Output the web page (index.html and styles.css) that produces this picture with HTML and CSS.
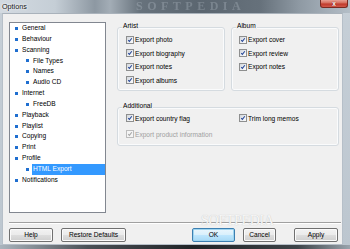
FILE: index.html
```html
<!DOCTYPE html>
<html>
<head>
<meta charset="utf-8">
<link rel="stylesheet" href="styles.css">
</head>
<body>
<div class="window">
  <div class="titlebar">
    <span class="title">Options</span>
    <span class="wm-title">SOFTPEDIA</span>
    <span class="close">x</span>
  </div>
  <div class="client">
    <div class="main">
      <div class="tree">
        <div class="item l1"><span class="bullet"></span><span class="label">General</span></div>
        <div class="item l1"><span class="bullet"></span><span class="label">Behaviour</span></div>
        <div class="item l1"><span class="bullet"></span><span class="label">Scanning</span></div>
        <div class="item l2"><span class="bullet"></span><span class="label">File Types</span></div>
        <div class="item l2"><span class="bullet"></span><span class="label">Names</span></div>
        <div class="item l2"><span class="bullet"></span><span class="label">Audio CD</span></div>
        <div class="item l1"><span class="bullet"></span><span class="label">Internet</span></div>
        <div class="item l2"><span class="bullet"></span><span class="label">FreeDB</span></div>
        <div class="item l1"><span class="bullet"></span><span class="label">Playback</span></div>
        <div class="item l1"><span class="bullet"></span><span class="label">Playlist</span></div>
        <div class="item l1"><span class="bullet"></span><span class="label">Copying</span></div>
        <div class="item l1"><span class="bullet"></span><span class="label">Print</span></div>
        <div class="item l1"><span class="bullet"></span><span class="label">Profile</span></div>
        <div class="item l2 selected"><span class="bullet"></span><span class="label">HTML Export</span></div>
        <div class="item l1"><span class="bullet"></span><span class="label">Notifications</span></div>
      </div>
      <div class="panel">
        <div class="top-groups">
          <div class="group artist">
            <span class="group-title">Artist</span>
            <div class="check"><span class="cb"><svg viewBox="0 0 8 8"><path d="M1.6 4.2 L3.2 5.9 L6.4 1.6"/></svg></span>Export photo</div>
            <div class="check"><span class="cb"><svg viewBox="0 0 8 8"><path d="M1.6 4.2 L3.2 5.9 L6.4 1.6"/></svg></span>Export biography</div>
            <div class="check"><span class="cb"><svg viewBox="0 0 8 8"><path d="M1.6 4.2 L3.2 5.9 L6.4 1.6"/></svg></span>Export notes</div>
            <div class="check"><span class="cb"><svg viewBox="0 0 8 8"><path d="M1.6 4.2 L3.2 5.9 L6.4 1.6"/></svg></span>Export albums</div>
          </div>
          <div class="group album">
            <span class="group-title">Album</span>
            <div class="check"><span class="cb"><svg viewBox="0 0 8 8"><path d="M1.6 4.2 L3.2 5.9 L6.4 1.6"/></svg></span>Export cover</div>
            <div class="check"><span class="cb"><svg viewBox="0 0 8 8"><path d="M1.6 4.2 L3.2 5.9 L6.4 1.6"/></svg></span>Export review</div>
            <div class="check"><span class="cb"><svg viewBox="0 0 8 8"><path d="M1.6 4.2 L3.2 5.9 L6.4 1.6"/></svg></span>Export notes</div>
          </div>
        </div>
        <div class="group additional">
          <span class="group-title">Additional</span>
          <div class="add-grid">
            <div class="check"><span class="cb"><svg viewBox="0 0 8 8"><path d="M1.6 4.2 L3.2 5.9 L6.4 1.6"/></svg></span>Export country flag</div>
            <div class="check"><span class="cb"><svg viewBox="0 0 8 8"><path d="M1.6 4.2 L3.2 5.9 L6.4 1.6"/></svg></span>Trim long memos</div>
            <div class="check disabled"><span class="cb"><svg viewBox="0 0 8 8"><path d="M1.6 4.2 L3.2 5.9 L6.4 1.6"/></svg></span>Export product information</div>
          </div>
        </div>
      </div>
    </div>
    <div class="sep"></div>
    <div class="buttons">
      <span class="btn help">Help</span>
      <span class="btn restore">Restore Defaults</span>
      <span class="btn ok">OK</span>
      <span class="btn cancel">Cancel</span>
      <span class="btn apply">Apply</span>
    </div>
    <span class="wm-bottom">SOFTPEDIA</span>
  </div>
</div>
</body>
</html>
```

FILE: styles.css
```css
html, body {
  margin: 0;
  padding: 0;
  width: 350px;
  height: 249px;
  overflow: hidden;
  font-family: "Liberation Sans", Arial, sans-serif;
  font-size: 6.6px;
  color: #000;
}

.window {
  position: relative;
  width: 350px;
  height: 249px;
  background:
    linear-gradient(90deg, #aab4bd 0%, #4a5056 25%, #202326 55%, #3d4348 85%, #9aa4ad 100%) bottom / 100% 4px no-repeat,
    linear-gradient(180deg, #c6cfd7 0%, #bcc6cf 100%);
}

.titlebar {
  position: relative;
  height: 13px;
  background: linear-gradient(90deg, #d3dae1 0px, #c5ced6 55px, #8d98a2 95px, #a3adb6 110px, #67727c 140px, #5b6670 200px, #66717b 260px, #8f9aa4 300px, #b4bec7 350px);
}

.title {
  position: absolute;
  left: 2px;
  top: 2px;
  font-size: 7.2px;
  line-height: 9px;
  color: #111;
  text-shadow: 0 0 3px #fff, 0 0 2px #fff;
}

.wm-title {
  position: absolute;
  left: 136px;
  top: 0;
  font-family: "Liberation Serif", serif;
  font-weight: bold;
  font-size: 12px;
  line-height: 13px;
  letter-spacing: 4.5px;
  color: rgba(225, 232, 240, 0.22);
  filter: blur(0.6px);
}

.close {
  position: absolute;
  right: 2px;
  top: 0;
  width: 28px;
  height: 8px;
  box-sizing: border-box;
  border: 1px solid #7a2a22;
  border-top: none;
  border-radius: 0 0 3px 3px;
  background: linear-gradient(180deg, #e8a094 0%, #d46a5a 45%, #c0392b 55%, #d0584a 100%);
  color: #fff;
  font-weight: bold;
  font-size: 6.5px;
  line-height: 7px;
  text-align: center;
  text-shadow: 0 0 1px #600;
}

.client {
  position: relative;
  box-sizing: border-box;
  margin: 0 7px 0 2px;
  height: 232px;
  background: #f0f0f0;
  border: 1px solid #b6bfc8;
  border-top-color: #a9b2bb;
  padding: 8px 0 0 6px;
}

.main {
  display: flex;
  align-items: flex-start;
}

.tree {
  box-sizing: border-box;
  width: 97px;
  height: 191px;
  background: #fff;
  border: 1px solid #828790;
}

.item {
  display: flex;
  align-items: stretch;
  height: 10.85px;
}

.item.l1 { padding-left: 5px; }
.item.l2 { padding-left: 16px; }

.bullet {
  align-self: center;
  width: 3px;
  height: 3px;
  margin-right: 3px;
  background: #1f6fd0;
  flex: none;
}

.item.l1 .bullet { margin-right: 4px; }

.label {
  flex: 1;
  line-height: 10.85px;
  padding-left: 1px;
  white-space: nowrap;
}

.item.l1 .label { padding-left: 0; }

.item.selected .label {
  background: #3399ff;
  color: #fff;
}

.panel {
  margin-left: 11px;
  margin-top: 5px;
  width: 222px;
}

.top-groups {
  display: flex;
  gap: 6px;
}

.group {
  position: relative;
  box-sizing: border-box;
  border: 1px solid #d5dbe0;
  border-radius: 3px;
  box-shadow: inset 0 0 0 1px #fafbfc;
}

.group-title {
  position: absolute;
  left: 4px;
  top: -7px;
  padding: 0 1px;
  line-height: 9px;
  background: #f0f0f0;
}

.artist {
  width: 108px;
  height: 64px;
  padding: 5px 0 0 8px;
}

.album {
  width: 108px;
  height: 64px;
  padding: 5px 0 0 7px;
}

.additional {
  margin-top: 16px;
  height: 39px;
  padding: 3.5px 0 0 8px;
}

.add-grid {
  display: grid;
  grid-template-columns: 113px auto;
  row-gap: 2.5px;
}

.check {
  display: flex;
  align-items: center;
  height: 13.5px;
  white-space: nowrap;
}

.cb {
  box-sizing: border-box;
  width: 8px;
  height: 8px;
  margin-right: 1px;
  border: 1px solid #8e8f8f;
  background: linear-gradient(135deg, #d2d6dc 0%, #eef0f2 60%, #fbfbfb 100%);
  display: flex;
  flex: none;
}

.cb svg {
  width: 6px;
  height: 6px;
}

.cb path {
  fill: none;
  stroke: #2a4a9a;
  stroke-width: 1.4;
}

.check.disabled {
  color: #a0a0a0;
}

.check.disabled .cb {
  border-color: #bcbcbc;
  background: #f4f4f4;
}

.check.disabled .cb path {
  stroke: #a8a8a8;
}

.sep {
  width: 332px;
  height: 1px;
  margin-top: 9px;
  background: #a0a0a0;
  border-bottom: 1px solid #fff;
}

.buttons {
  display: flex;
  width: 332px;
  margin-top: 4px;
}

.btn {
  box-sizing: border-box;
  height: 14px;
  border: 1px solid #707070;
  border-radius: 2px;
  background: linear-gradient(180deg, #f2f2f2 0%, #ebebeb 48%, #dddddd 52%, #cfcfcf 100%);
  box-shadow: inset 0 0 0 1px #fbfbfb;
  text-align: center;
  line-height: 12px;
  white-space: nowrap;
}

.help { width: 44px; }
.restore { width: 65px; margin-left: 8px; }
.ok {
  width: 43px;
  margin-left: auto;
  border-color: #3c7fb1;
  box-shadow: inset 0 0 0 1px #9fd5f0;
  background: linear-gradient(180deg, #eaf6fd 0%, #d9f0fc 48%, #bee6fd 52%, #a7d9f5 100%);
}
.cancel { width: 33px; margin-left: 8px; }
.apply { width: 44px; margin-left: 18px; margin-right: 3px; }

.wm-bottom {
  position: absolute;
  left: 198px;
  top: 200px;
  font-family: "Liberation Serif", serif;
  font-size: 14px;
  line-height: 14px;
  letter-spacing: -0.3px;
  color: #f7f7f7;
  text-shadow: 0 0 1px #b8b8b8;
}
```
